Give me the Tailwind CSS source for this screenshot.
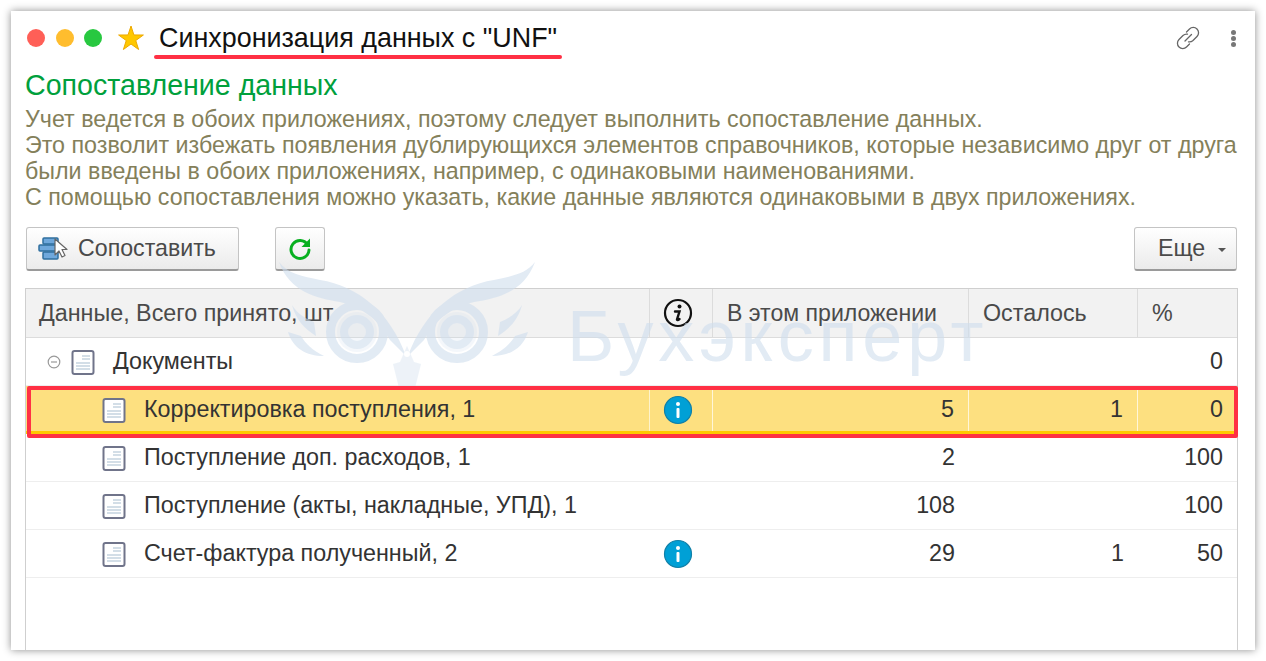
<!DOCTYPE html>
<html lang="ru"><head><meta charset="utf-8"><script src="https://cdn.jsdelivr.net/npm/@tailwindcss/browser@4"></script></head>
<body class="bg-white overflow-hidden font-['Liberation_Sans',Arial,sans-serif]">
<div class="h-[661px] w-[1266px] pt-[11px] pl-[11px]">
<div class="relative h-[639px] w-[1244px] bg-white shadow-[0_0_8px_rgba(0,0,0,0.45)] overflow-hidden">
  <!-- title -->
  <div class="h-[52px] flex items-center pl-[16px] pr-[19px] pt-[2px]">
    <span class="w-[18px] h-[18px] rounded-full bg-[#ff5f57]"></span>
    <span class="w-[18px] h-[18px] rounded-full bg-[#ffbd2e] ml-[10.500px]"></span>
    <span class="w-[18px] h-[18px] rounded-full bg-[#28c840] ml-[10.500px]"></span>
    <svg class="ml-[16px]" width="26" height="26" viewBox="0 0 26 26"><path d="M13 1L15.900 9.950 25.400 10 17.760 15.550 20.600 24.500 13 19 5.400 24.500 8.240 15.550 .6 10 10.060 9.950Z" fill="#ffc800" stroke="#eda900" stroke-width="1" stroke-linejoin="round"/></svg>
    <div class="relative ml-[15px] text-[26.900px] leading-[32px] text-[#111] whitespace-nowrap">Синхронизация данных с "UNF"<span class="absolute left-[-5px] right-[-5px] top-[33px] h-[4px] rounded-full bg-[#ff3044]"></span></div>
    <div class="ml-auto flex items-center gap-[30px]">
      <svg width="26" height="26" viewBox="0 0 26 26" fill="none" stroke="#666" stroke-width="1.300" stroke-linecap="round"><path d="M10 16L16.500 9.500M11.500 7l3-3a5.300 5.300 0 0 1 7.500 7.500l-4 4a5.300 5.300 0 0 1-4.500 1.300M14.500 19l-3 3A5.300 5.300 0 0 1 4 14.500l4-4a5.300 5.300 0 0 1 4.500-1.300"/></svg>
      <span class="flex flex-col gap-[1px]"><span class="w-[5px] h-[5px] rounded-full bg-[#777]"></span><span class="w-[5px] h-[5px] rounded-full bg-[#777]"></span><span class="w-[5px] h-[5px] rounded-full bg-[#777]"></span></span>
    </div>
  </div>
  <!-- heading and note -->
  <div class="pl-[14px] pt-[6px]">
    <h1 class="text-[28.600px] leading-[32px] text-[#00a03c]">Сопоставление данных</h1>
    <div class="mt-[5px] text-[23.250px] leading-[26px] text-[#84805a] whitespace-nowrap">
      <p>Учет ведется в обоих приложениях, поэтому следует выполнить сопоставление данных.</p>
      <p>Это позволит избежать появления дублирующихся элементов справочников, которые независимо друг от друга</p>
      <p>были введены в обоих приложениях, например, с одинаковыми наименованиями.</p>
      <p>С помощью сопоставления можно указать, какие данные являются одинаковыми в двух приложениях.</p>
    </div>
  </div>
  <!-- toolbar -->
  <div class="mt-[17px] mx-[15px] w-[1211px] flex">
    <button class="h-[44px] w-[213px] rounded-[3px] border border-[#c4c4c4] border-b-[2px] border-b-[#9a9a9a] bg-gradient-to-b from-white to-[#ebebeb] flex items-center pl-[11px] text-[23.200px] text-[#4a4a4a]">
      <svg width="30" height="26" viewBox="0 0 30 26"><g fill="#6fa8dc" stroke="#2f6f9f" stroke-width="1.500"><rect x="5" y="2" width="15" height="6" rx="1"/><rect x="1" y="9" width="18" height="6" rx="1"/><rect x="5" y="16" width="15" height="7" rx="1"/></g><path d="M17 3l0 16 4-4 3 6 3-1.500-3-6 5 0z" fill="#fff" stroke="#666" stroke-width="1.200" stroke-linejoin="round"/></svg>
      <span class="ml-[10px]">Сопоставить</span>
    </button>
    <button class="ml-[36px] h-[44px] w-[50px] rounded-[3px] border border-[#c4c4c4] border-b-[2px] border-b-[#9a9a9a] bg-gradient-to-b from-white to-[#ebebeb] flex items-center justify-center">
      <svg width="26" height="26" viewBox="0 0 26 26" fill="none"><path d="M20.500 8.500A9 9 0 1 0 22 14" stroke="#08b020" stroke-width="3" stroke-linecap="round"/><path d="M23 2.500v8.500h-8.500z" fill="#08b020"/></svg>
    </button>
    <button class="ml-auto h-[44px] w-[103px] rounded-[3px] border border-[#c4c4c4] border-b-[2px] border-b-[#9a9a9a] bg-gradient-to-b from-white to-[#ebebeb] flex items-center pl-[23px] text-[23.200px] text-[#4a4a4a]">
      Еще<span class="ml-[13px] mt-[2px] w-0 h-0 border-x-[4px] border-x-transparent border-t-[4px] border-t-[#555]"></span>
    </button>
  </div>
  <!-- table -->
  <div class="absolute left-[14px] top-[277px] w-[1213px] h-[362px] border border-[#cfcfcf] border-b-0 text-[23.300px] text-[#333]">
    <div class="grid grid-cols-[624px_63px_256px_169px_99px] h-[49px] bg-[#f2f2f2] border-b border-[#dcdcdc] text-[#4a4a4a]">
      <div class="flex items-center pl-[13px] border-r border-[#dcdcdc]">Данные, Всего принято, шт</div>
      <div class="flex items-center pl-[13px] border-r border-[#dcdcdc]">
        <svg width="30" height="30" viewBox="0 0 30 30"><circle cx="15" cy="15" r="13" fill="none" stroke="#111" stroke-width="2.200"/><circle cx="16.500" cy="8.500" r="2" fill="#111"/><path d="M12 13.500h4.500l-2.500 8c0 .8.800 .8 2.500-.5" fill="none" stroke="#111" stroke-width="2.400" stroke-linecap="round"/></svg>
      </div>
      <div class="flex items-center pl-[14px] border-r border-[#dcdcdc] text-[23.100px]">В этом приложении</div>
      <div class="flex items-center pl-[14px] border-r border-[#dcdcdc]">Осталось</div>
      <div class="flex items-center pl-[14px]">%</div>
    </div>
    <div class="grid grid-cols-[624px_63px_256px_169px_99px] h-[48px] border-b border-[#eee] items-center">
      <div class="flex items-center pl-[21px]">
        <svg width="14" height="14" viewBox="0 0 14 14" fill="none" stroke="#999" stroke-width="1.200"><circle cx="7" cy="7" r="5.800"/><path d="M4 7h6"/></svg>
        <svg class="ml-[10px]" width="24" height="26" viewBox="0 0 24 26"><rect x="1.500" y="2" width="21" height="23" rx="2" fill="#fff" stroke="#70748a" stroke-width="2"/><path d="M11 7h8M11 10h8M5 14h14M5 17h14M5 20h14" stroke="#c5d3e0" stroke-width="1.500"/></svg>
        <span class="ml-[18px]">Документы</span>
      </div>
      <div></div><div></div><div></div><div class="text-right pr-[14px]">0</div>
    </div>
    <div class="relative z-20 grid grid-cols-[624px_63px_256px_169px_99px] h-[48px] items-center bg-[#fde080] border-b-[3px] border-[#ffc800]">
      <div class="h-full flex items-center pt-[2px] pl-[76px] border-r border-white/60">
        <svg width="24" height="26" viewBox="0 0 24 26"><rect x="1.500" y="2" width="21" height="23" rx="2" fill="#fff" stroke="#70748a" stroke-width="2"/><path d="M11 7h8M11 10h8M5 14h14M5 17h14M5 20h14" stroke="#c5d3e0" stroke-width="1.500"/></svg>
        <span class="ml-[18px]">Корректировка поступления, 1</span>
      </div>
      <div class="h-full flex items-center pt-[2px] pl-[13px] border-r border-white/70">
        <svg width="30" height="30" viewBox="0 0 30 30"><circle cx="15" cy="15" r="13.500" fill="#00a0d6" stroke="#1180a8" stroke-width="1.200"/><circle cx="15" cy="9" r="2" fill="#fff"/><rect x="13.500" y="13" width="3" height="10" rx="1" fill="#fff"/></svg>
      </div>
      <div class="h-full flex items-center justify-end pt-[2px] pr-[14px] border-r border-white/70">5</div>
      <div class="h-full flex items-center justify-end pt-[2px] pr-[14px] border-r border-white/70">1</div>
      <div class="h-full flex items-center justify-end pt-[2px] pr-[14px]">0</div>
    </div>
    <div class="grid grid-cols-[624px_63px_256px_169px_99px] h-[48px] border-b border-[#eee] items-center">
      <div class="flex items-center pl-[76px]">
        <svg width="24" height="26" viewBox="0 0 24 26"><rect x="1.500" y="2" width="21" height="23" rx="2" fill="#fff" stroke="#70748a" stroke-width="2"/><path d="M11 7h8M11 10h8M5 14h14M5 17h14M5 20h14" stroke="#c5d3e0" stroke-width="1.500"/></svg>
        <span class="ml-[18px]">Поступление доп. расходов, 1</span>
      </div>
      <div></div><div class="text-right pr-[14px]">2</div><div></div><div class="text-right pr-[14px]">100</div>
    </div>
    <div class="grid grid-cols-[624px_63px_256px_169px_99px] h-[48px] border-b border-[#eee] items-center">
      <div class="flex items-center pl-[76px]">
        <svg width="24" height="26" viewBox="0 0 24 26"><rect x="1.500" y="2" width="21" height="23" rx="2" fill="#fff" stroke="#70748a" stroke-width="2"/><path d="M11 7h8M11 10h8M5 14h14M5 17h14M5 20h14" stroke="#c5d3e0" stroke-width="1.500"/></svg>
        <span class="ml-[18px]">Поступление (акты, накладные, УПД), 1</span>
      </div>
      <div></div><div class="text-right pr-[14px]">108</div><div></div><div class="text-right pr-[14px]">100</div>
    </div>
    <div class="grid grid-cols-[624px_63px_256px_169px_99px] h-[48px] border-b border-[#eee] items-center">
      <div class="flex items-center pl-[76px]">
        <svg width="24" height="26" viewBox="0 0 24 26"><rect x="1.500" y="2" width="21" height="23" rx="2" fill="#fff" stroke="#70748a" stroke-width="2"/><path d="M11 7h8M11 10h8M5 14h14M5 17h14M5 20h14" stroke="#c5d3e0" stroke-width="1.500"/></svg>
        <span class="ml-[18px]">Счет-фактура полученный, 2</span>
      </div>
      <div class="flex pl-[13px]">
        <svg width="30" height="30" viewBox="0 0 30 30"><circle cx="15" cy="15" r="13.500" fill="#00a0d6" stroke="#1180a8" stroke-width="1.200"/><circle cx="15" cy="9" r="2" fill="#fff"/><rect x="13.500" y="13" width="3" height="10" rx="1" fill="#fff"/></svg>
      </div>
      <div class="text-right pr-[14px]">29</div><div class="text-right pr-[14px]">1</div><div class="text-right pr-[14px]">50</div>
    </div>
  </div>
  <!-- watermark -->
  <div class="absolute z-10 left-[249px] top-[239px] w-[740px] h-[150px] pointer-events-none opacity-60">
    <svg class="absolute left-0 top-0" width="300" height="150" viewBox="0 0 300 150" fill="#cfdeee">
      <path d="M19 12C28 24 42 26 60 30C98 36 130 62 146 106L130 90C120 72 105 58 80 52C56 48 30 42 19 12Z"/>
      <path d="M275 12C266 24 252 26 234 30C196 36 164 62 148 106L164 90C174 72 189 58 214 52C238 48 264 42 275 12Z"/>
      <circle cx="97" cy="82" r="20" fill="#cfdeee" fill-opacity=".35"/><circle cx="197" cy="82" r="20" fill="#cfdeee" fill-opacity=".35"/>
      <circle cx="97" cy="82" r="26.500" fill="none" stroke="#cfdeee" stroke-width="9"/><circle cx="97" cy="82" r="13" fill="none" stroke="#cfdeee" stroke-width="8"/>
      <circle cx="197" cy="82" r="26.500" fill="none" stroke="#cfdeee" stroke-width="9"/><circle cx="197" cy="82" r="13" fill="none" stroke="#cfdeee" stroke-width="8"/>
      <path d="M28 82C33 98 46 106 64 106C52 100 46 94 41 86Z"/><path d="M268 82C263 98 250 106 232 106C244 100 250 94 255 86Z"/>
      <path d="M32 55C36 70 44 78 56 86L54 72C44 68 36 62 32 55Z"/><path d="M262 55C258 70 250 78 238 86L240 72C250 68 258 62 262 55Z"/>
      <path d="M147 96L140 112L133 114L142 150H152L161 114L154 112Z" fill-opacity=".6"/>
      <circle cx="147" cy="104" r="3" fill="#fff"/>
    </svg>
    <span class="absolute left-[307px] top-[51px] text-[72px] leading-[70px] tracking-[4.800px] text-[#cfdeee] whitespace-nowrap">Бухэксперт</span>
  </div>
  <!-- highlight frame -->
  <div class="absolute z-30 left-[16px] top-[375px] w-[1211px] h-[52px] border-[4px] border-[#ff3044] rounded-[2px] pointer-events-none"></div>
</div>
</div>
</body></html>
